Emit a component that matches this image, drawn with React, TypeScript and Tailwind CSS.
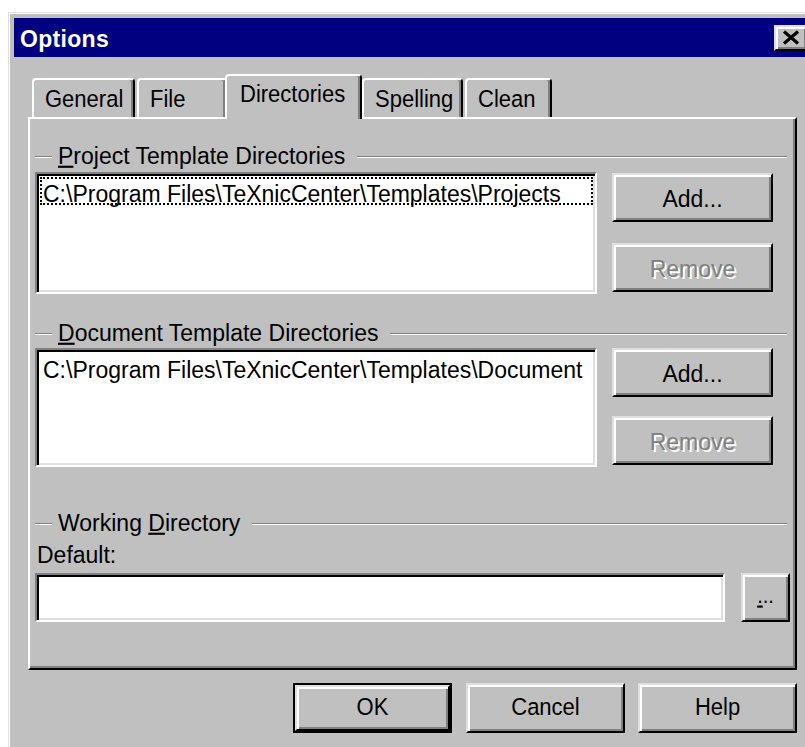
import React from "react";

// Text run drawn slightly taller than the stock sans face, like the old bitmap dialog font
function T({ children, className = "" }: { children: React.ReactNode; className?: string }) {
  return <span className={`inline-block scale-y-[1.07] whitespace-nowrap ${className}`}>{children}</span>;
}

type BtnProps = {
  className?: string;
  children?: React.ReactNode;
  disabled?: boolean;
};

// Classic 3D raised push button
function Btn({ className = "", children, disabled }: BtnProps) {
  return (
    <div
      className={`flex items-center justify-center bg-[#c0c0c0] border-2 border-t-[#dfdfdf] border-l-[#dfdfdf] border-r-black border-b-black shadow-[inset_2px_2px_0_#fff,inset_-2px_-2px_0_#808080] ${className}`}
    >
      <T
        className={
          disabled
            ? "text-[#808080] [text-shadow:2px_2px_0_#ffffff]"
            : "text-black"
        }
      >
        {children}
      </T>
    </div>
  );
}

// Sunken white field (list box / edit box)
function Sunken({
  className = "",
  children,
}: {
  className?: string;
  children?: React.ReactNode;
}) {
  return (
    <div
      className={`bg-white overflow-hidden border-2 border-t-[#808080] border-l-[#808080] border-r-white border-b-white shadow-[inset_2px_2px_0_#000,inset_-2px_-2px_0_#dfdfdf] ${className}`}
    >
      {children}
    </div>
  );
}

// Etched horizontal line segment
function Etch({ className = "" }: { className?: string }) {
  return (
    <div
      className={`h-[2px] border-t border-b border-t-[#808080] border-b-white ${className}`}
    />
  );
}

function GroupHeader({ children }: { children: React.ReactNode }) {
  return (
    <div className="flex items-center h-[30px] w-[752px]">
      <Etch className="w-[17px] mt-[4px]" />
      <T className="ml-[6px]">{children}</T>
      <Etch className="flex-1 ml-[12px] mt-[4px]" />
    </div>
  );
}

type TabProps = { label: string; width: string; selected?: boolean; extra?: string };

function Tab({ label, width, selected, extra = "" }: TabProps) {
  if (selected) {
    return (
      <div
        className={`relative z-10 h-[45px] -mb-[2px] bg-[#c0c0c0] border-l-2 border-t-2 border-r-2 border-l-white border-t-white border-r-black rounded-tl-[4px] rounded-tr-[4px] shadow-[inset_-2px_0_0_#808080] flex pt-[6px] text-[22px] ${width} ${extra}`}
      >
        <T className="pl-[13px]">{label}</T>
      </div>
    );
  }
  return (
    <div
      className={`h-[39px] bg-[#c0c0c0] border-l-2 border-t-2 border-r-2 border-l-white border-t-white border-r-black rounded-tl-[4px] rounded-tr-[4px] shadow-[inset_-2px_0_0_#808080] flex pt-[7px] text-[22px] ${width} ${extra}`}
    >
      <T className="pl-[11px]">{label}</T>
    </div>
  );
}

const ul = "underline decoration-[2px] underline-offset-[2px]";

export default function App() {
  return (
    <div className="w-[805px] h-[747px] overflow-hidden bg-white font-['Liberation_Sans',Arial,sans-serif] text-[23px] leading-[26px] text-black">
      <div className="ml-[8px] mt-[12px] w-[806px] h-[740px] border-l border-t border-[#dfdfdf] bg-[#c0c0c0]">
        <div className="h-full border-l border-t border-white pl-[4px] pt-[4px]">
          {/* Title bar */}
          <div className="h-[39px] bg-[#000080] flex items-center pl-[6px] pr-[6px]">
            <T className="text-white font-bold text-[23px] tracking-[0.3px]">Options</T>
            <div className="ml-auto w-[34px] h-[26px] flex items-center justify-center bg-[#c0c0c0] border-2 border-t-[#dfdfdf] border-l-[#dfdfdf] border-r-black border-b-black shadow-[inset_2px_2px_0_#fff,inset_-2px_-2px_0_#808080]">
              <svg width="18" height="15" viewBox="0 0 18 15">
                <path
                  d="M2 1.5 L16 13.5 M16 1.5 L2 13.5"
                  stroke="#000"
                  strokeWidth="3.2"
                  fill="none"
                />
              </svg>
            </div>
          </div>

          <div className="pl-[14px] pt-[17px]">
            {/* Tab strip */}
            <div className="flex items-end h-[43px]">
              <Tab label="General" width="w-[103px]" extra="ml-[4px]" />
              <Tab label="File" width="w-[90px]" extra="ml-[2px]" />
              <Tab label="Directories" width="w-[137px]" extra="-ml-[2px]" selected />
              <Tab label="Spelling" width="w-[101px]" />
              <Tab label="Clean" width="w-[87px]" extra="ml-[2px]" />
            </div>

            {/* Tab page */}
            <div className="w-[769px] h-[553px] border-2 border-t-white border-l-white border-r-black border-b-black shadow-[inset_-2px_-2px_0_#808080] pl-[5px] pt-[21px]">
              <GroupHeader>
                <u className={ul}>P</u>roject Template Directories
              </GroupHeader>
              <div className="flex mt-[2px]">
                <Sunken className="w-[562px] h-[122px] pt-[3px] pl-[3px] pr-[2px]">
                  <div className="h-[28px] border-2 border-dotted border-black pl-[1px] pt-[2px] leading-[24px]">
                    <T>C:\Program Files\TeXnicCenter\Templates\Projects</T>
                  </div>
                </Sunken>
                <div className="ml-[15px] flex flex-col">
                  <Btn className="w-[161px] h-[49px] mt-[1px]">Add...</Btn>
                  <Btn className="w-[161px] h-[49px] mt-[21px]" disabled>
                    Remove
                  </Btn>
                </div>
              </div>

              <div className="mt-[23px]">
                <GroupHeader>
                  <u className={ul}>D</u>ocument Template Directories
                </GroupHeader>
              </div>
              <div className="flex mt-[1px]">
                <Sunken className="w-[562px] h-[119px] pt-[3px] pl-[3px] pr-[2px]">
                  <div className="h-[28px] border-2 border-transparent pl-[1px] pt-[2px] leading-[24px]">
                    <T>C:\Program Files\TeXnicCenter\Templates\Document</T>
                  </div>
                </Sunken>
                <div className="ml-[15px] flex flex-col">
                  <Btn className="w-[161px] h-[49px]">Add...</Btn>
                  <Btn className="w-[161px] h-[49px] mt-[19px]" disabled>
                    Remove
                  </Btn>
                </div>
              </div>

              <div className="mt-[40px]">
                <GroupHeader>
                  Working <u className={ul}>D</u>irectory
                </GroupHeader>
              </div>
              <div className="mt-[4px] h-[26px] pl-[2px]">
                <T>Default:</T>
              </div>
              <div className="flex mt-[6px]">
                <Sunken className="w-[690px] h-[49px]" />
                <Btn className="ml-[16px] w-[49px] h-[49px]">
                  <span className="relative top-[-2px] text-[20px]">
                    <u className={ul}>.</u>..
                  </span>
                </Btn>
              </div>
            </div>

            {/* Dialog buttons */}
            <div className="flex w-[769px] justify-end mt-[13px] text-[22px]">
              <div className="w-[159px] h-[50px] border-2 border-black">
                <Btn className="w-full h-full">OK</Btn>
              </div>
              <Btn className="w-[159px] h-[50px] ml-[14px]">Cancel</Btn>
              <Btn className="w-[159px] h-[50px] ml-[13px]">Help</Btn>
            </div>
          </div>
        </div>
      </div>
    </div>
  );
}
